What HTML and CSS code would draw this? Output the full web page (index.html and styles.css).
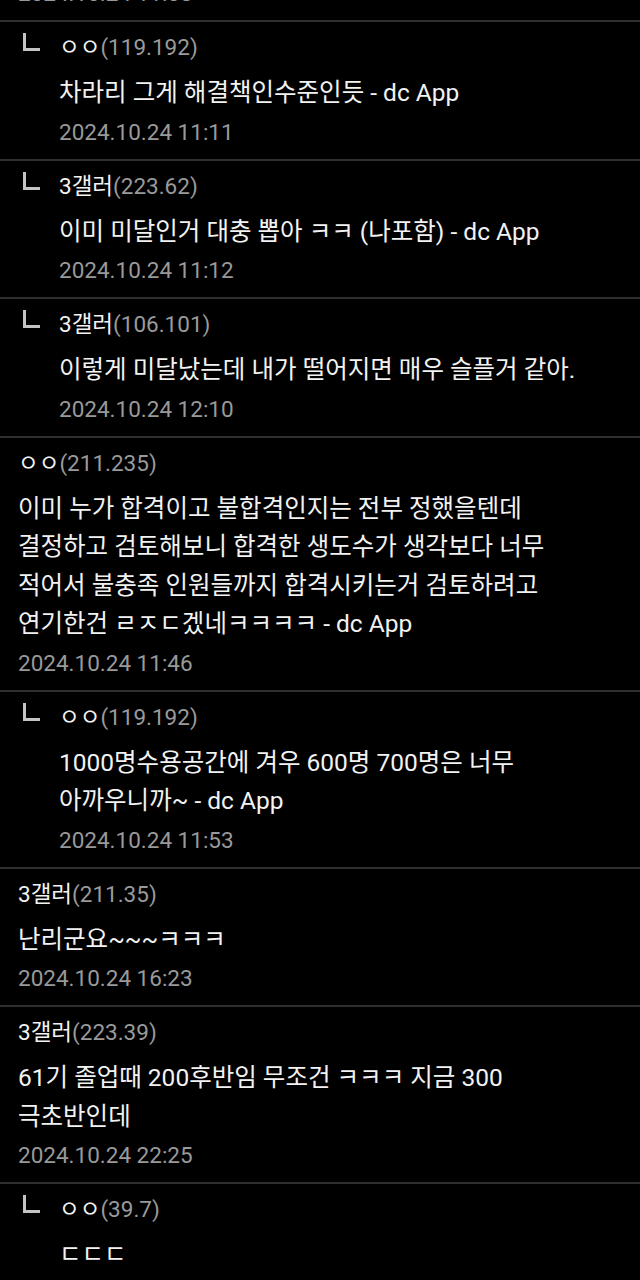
FILE: index.html
```html
<!DOCTYPE html>
<html lang="ko">
<head>
    <meta charset="UTF-8">
    <meta name="viewport" content="width=device-width, initial-scale=1.0">
    <title>댓글</title>
    <link rel="stylesheet" href="styles.css">
</head>
<body>

<ul class="comments">
    <li class="comment">
        <div class="body">
            <div class="name">ㅇㅇ<span class="ip">(118.235)</span></div>
            <div class="text">ㅋㅋㅋㅋ</div>
            <div class="date">2024.10.24 11:08</div>
        </div>
    </li>
    <li class="comment reply">
        <span class="mark"></span>
        <div class="body">
            <div class="name">ㅇㅇ<span class="ip">(119.192)</span></div>
            <div class="text">차라리 그게 해결책인수준인듯 - dc App</div>
            <div class="date">2024.10.24 11:11</div>
        </div>
    </li>
    <li class="comment reply">
        <span class="mark"></span>
        <div class="body">
            <div class="name">3갤러<span class="ip">(223.62)</span></div>
            <div class="text">이미 미달인거 대충 뽑아 ㅋㅋ (나포함) - dc App</div>
            <div class="date">2024.10.24 11:12</div>
        </div>
    </li>
    <li class="comment reply">
        <span class="mark"></span>
        <div class="body">
            <div class="name">3갤러<span class="ip">(106.101)</span></div>
            <div class="text">이렇게 미달났는데 내가 떨어지면 매우 슬플거 같아.</div>
            <div class="date">2024.10.24 12:10</div>
        </div>
    </li>
    <li class="comment">
        <div class="body">
            <div class="name">ㅇㅇ<span class="ip">(211.235)</span></div>
            <div class="text">이미 누가 합격이고 불합격인지는 전부 정했을텐데<br>결정하고 검토해보니 합격한 생도수가 생각보다 너무<br>적어서 불충족 인원들까지 합격시키는거 검토하려고<br>연기한건 ㄹㅈㄷ겠네ㅋㅋㅋㅋ - dc App</div>
            <div class="date">2024.10.24 11:46</div>
        </div>
    </li>
    <li class="comment reply">
        <span class="mark"></span>
        <div class="body">
            <div class="name">ㅇㅇ<span class="ip">(119.192)</span></div>
            <div class="text">1000명수용공간에 겨우 600명 700명은 너무<br>아까우니까~ - dc App</div>
            <div class="date">2024.10.24 11:53</div>
        </div>
    </li>
    <li class="comment">
        <div class="body">
            <div class="name">3갤러<span class="ip">(211.35)</span></div>
            <div class="text">난리군요~~~ㅋㅋㅋ</div>
            <div class="date">2024.10.24 16:23</div>
        </div>
    </li>
    <li class="comment">
        <div class="body">
            <div class="name">3갤러<span class="ip">(223.39)</span></div>
            <div class="text">61기 졸업때 200후반임 무조건 ㅋㅋㅋ 지금 300<br>극초반인데</div>
            <div class="date">2024.10.24 22:25</div>
        </div>
    </li>
    <li class="comment reply">
        <span class="mark"></span>
        <div class="body">
            <div class="name">ㅇㅇ<span class="ip">(39.7)</span></div>
            <div class="text">ㄷㄷㄷ</div>
            <div class="date">2024.10.24 22:31</div>
        </div>
    </li>
</ul>

</body>
</html>
```

FILE: styles.css
```css
body {
    margin: 0;
    background-color: #000;
    color: #f2f2f2;
    font-family: Roboto, "Noto Sans CJK KR", sans-serif;
    height: 1280px;
    overflow: hidden;
}
.comments {
    list-style: none;
    margin: -116.5px 0 0 0;
    padding: 0;
}
.comment {
    display: flex;
    padding: 7px 0 8px 18px;
    border-bottom: 2px solid #2f2f2f;
}
.reply {
    padding-left: 23px;
}
.mark {
    flex: none;
    width: 14px;
    height: 15px;
    margin: 4px 19px 0 0;
    border-left: 3px solid #c4c4c4;
    border-bottom: 3px solid #c4c4c4;
}
.name {
    font-size: 22.5px;
    line-height: 36px;
    color: #f2f2f2;
}
.ip {
    color: #9a9a9a;
}
.text {
    margin-top: 9px;
    font-size: 24.5px;
    line-height: 38.5px;
}
.date {
    font-size: 22.5px;
    line-height: 38px;
    color: #999;
}
```
